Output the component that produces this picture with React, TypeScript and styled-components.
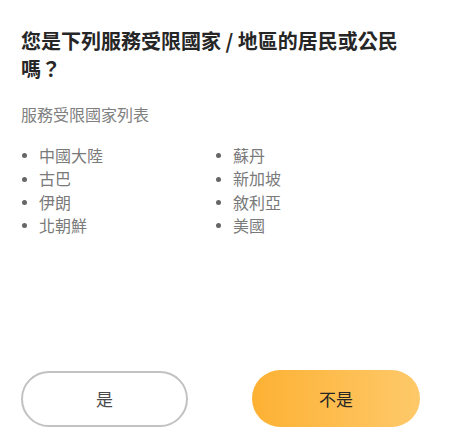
import React from "react";
import styled, { createGlobalStyle } from "styled-components";

const Global = createGlobalStyle`
  html, body { margin: 0; padding: 0; background: #fff; }
  body { font-family: "Noto Sans CJK TC", "Noto Sans", sans-serif; }
  * { box-sizing: border-box; }
`;

const Page = styled.div`
  height: 448px;
  display: flex;
  flex-direction: column;
  padding: 27px 21px 21px 21px;
`;

const Title = styled.h1`
  margin: 0;
  font-size: 20px;
  line-height: 28px;
  font-weight: 700;
  color: #262626;
  width: 390px;
`;

const Subtitle = styled.p`
  margin: 19px 0 0 0;
  font-size: 16px;
  line-height: 24px;
  color: #808080;
`;

const List = styled.ul`
  margin: 18px 0 0 0;
  padding: 0;
  list-style: none;
  display: grid;
  grid-template-columns: 194px 194px;
  grid-auto-flow: column;
  grid-template-rows: repeat(4, 23.4px);
`;

const Item = styled.li`
  display: flex;
  align-items: center;
  gap: 12px;
  font-size: 16px;
  line-height: 23.4px;
  color: #7a7a7a;
  &::before {
    content: "";
    width: 5px;
    height: 5px;
    border-radius: 50%;
    background: #666;
    margin-left: 1px;
    flex: none;
  }
`;

const Spacer = styled.div`
  flex: 1;
`;

const Actions = styled.div`
  display: flex;
  gap: 64px;
  align-items: center;
`;

const Button = styled.button<{ $primary?: boolean }>`
  height: ${(p) => (p.$primary ? "57px" : "56px")};
  width: ${(p) => (p.$primary ? "168px" : "167px")};
  border-radius: 29px;
  font-family: inherit;
  font-size: 17px;
  cursor: pointer;
  border: ${(p) => (p.$primary ? "none" : "2px solid #c2c2c2")};
  background: ${(p) =>
    p.$primary ? "linear-gradient(90deg, #fdb133 0%, #fec96a 100%)" : "#fff"};
  color: ${(p) => (p.$primary ? "#262626" : "#4a4a4a")};
`;

const left = ["中國大陸", "古巴", "伊朗", "北朝鮮"];
const right = ["蘇丹", "新加坡", "敘利亞", "美國"];

export default function App() {
  return (
    <>
      <Global />
      <Page>
        <Title>您是下列服務受限國家 / 地區的居民或公民嗎？</Title>
        <Subtitle>服務受限國家列表</Subtitle>
        <List>
          {[...left, ...right].map((c) => (
            <Item key={c}>{c}</Item>
          ))}
        </List>
        <Spacer />
        <Actions>
          <Button>是</Button>
          <Button $primary>不是</Button>
        </Actions>
      </Page>
    </>
  );
}
